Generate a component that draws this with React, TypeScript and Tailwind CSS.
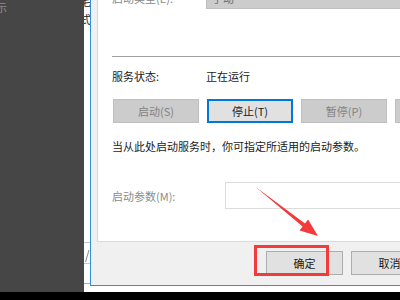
import React from "react";

const font = "font-['Noto_Sans_CJK_SC','Noto_Sans',sans-serif]";

function DisabledButton({ label }: { label: string }) {
  return (
    <div className="w-[86px] h-[24px] shrink-0 bg-[#cccccc] border border-[#bfbfbf] flex items-center justify-center text-[#838383]">
      {label}
    </div>
  );
}

export default function App() {
  return (
    <div className={`w-[400px] h-[300px] overflow-hidden relative bg-black flex flex-col text-[11px] leading-[16px] ${font}`}>
      <div className="h-[292px] flex shrink-0">
        {/* background desktop */}
        <div className="w-[84px] shrink-0 bg-[#464646] overflow-hidden">
          <div className="ml-[-4px] mt-[2px] text-[#8d8d8d] leading-[11px]">示</div>
        </div>

        <div className="flex-1 min-w-0 bg-white flex">
          {/* window behind */}
          <div className="w-[6px] shrink-0 flex flex-col overflow-hidden">
            <div className="h-[242px] overflow-hidden text-[#222] leading-[11px]">
              <div className="ml-[-4px] mt-[-4px]">毛</div>
              <div className="ml-[-4px] mt-[7px]">式</div>
            </div>
            <div className="h-px bg-[#c8c8c8]" />
            <div className="h-[20px]">
              <svg width="6" height="20" viewBox="0 0 6 20">
                <path d="M1.5 19 L5 7" stroke="#8a8a8a" strokeWidth="1" fill="none" />
              </svg>
            </div>
            <div className="h-px bg-[#c8c8c8]" />
            <div className="h-[19px]" />
            <div className="h-px bg-[#b0b0b0]" />
          </div>

          {/* dialog */}
          <div className="flex-1 min-w-0 h-[286px] border-l border-b border-[#2d8fe0] bg-[#f0f0f0] flex flex-col pl-[6px] overflow-hidden">
            <div className="w-[320px] h-[242px] shrink-0 bg-white border-l border-b border-[#dadada] pl-[14px] flex flex-col">
              <div className="mt-[-14px] h-[23px] flex items-center">
                <div className="w-[94px] shrink-0 text-[#8a8a8a]">启动类型(E):</div>
                <div className="flex-1 h-[23px] bg-[#cccccc] border border-[#bfbfbf] pl-[5px] flex items-center text-[#6d6d6d]">
                  手动
                </div>
              </div>

              <div className="mt-[47px] h-px bg-[#a0a0a0]" />

              <div className="mt-[11px] flex text-[#1a1a1a]">
                <div className="w-[94px] shrink-0">服务状态:</div>
                <div>正在运行</div>
              </div>

              <div className="mt-[15px] ml-px flex gap-[8px]">
                <DisabledButton label="启动(S)" />
                <div className="w-[86px] h-[24px] shrink-0 bg-[#e1e1e1] border-2 border-[#0078d7] flex items-center justify-center text-[#1a1a1a]">
                  停止(T)
                </div>
                <DisabledButton label="暂停(P)" />
                <DisabledButton label="恢复(R)" />
              </div>

              <div className="mt-[15px] text-[#1a1a1a] whitespace-nowrap">
                当从此处启动服务时，你可指定所适用的启动参数。
              </div>

              <div className="mt-[28px] h-[27px] flex items-center">
                <div className="w-[113px] shrink-0 text-[#8c8c8c]">启动参数(M):</div>
                <div className="flex-1 h-[27px] bg-white border border-[#dcdcdc]" />
              </div>
            </div>

            <div className="mt-[9px] ml-[169px] flex gap-[8px]">
              <div className="w-[77px] h-[24px] shrink-0 bg-[#e1e1e1] border border-[#adadad] flex items-center justify-center text-[#1a1a1a]">
                确定
              </div>
              <div className="w-[77px] h-[24px] shrink-0 bg-[#e1e1e1] border border-[#adadad] flex items-center justify-center text-[#1a1a1a]">
                取消
              </div>
            </div>
          </div>
        </div>
      </div>
      <div className="flex-1 bg-black" />

      {/* annotation overlay */}
      <div className="absolute left-[254px] top-[245px] w-[75px] h-[31px] border-[3px] border-[#f23b3b]" />
      <svg className="absolute left-0 top-0 pointer-events-none" width="400" height="300" viewBox="0 0 400 300">
        <path
          d="M255 186.5 L305 223.4 L308.1 219.5 L318 236 L299.5 230.5 L302.6 226.6 Z"
          fill="#f23b3b"
        />
      </svg>
    </div>
  );
}
